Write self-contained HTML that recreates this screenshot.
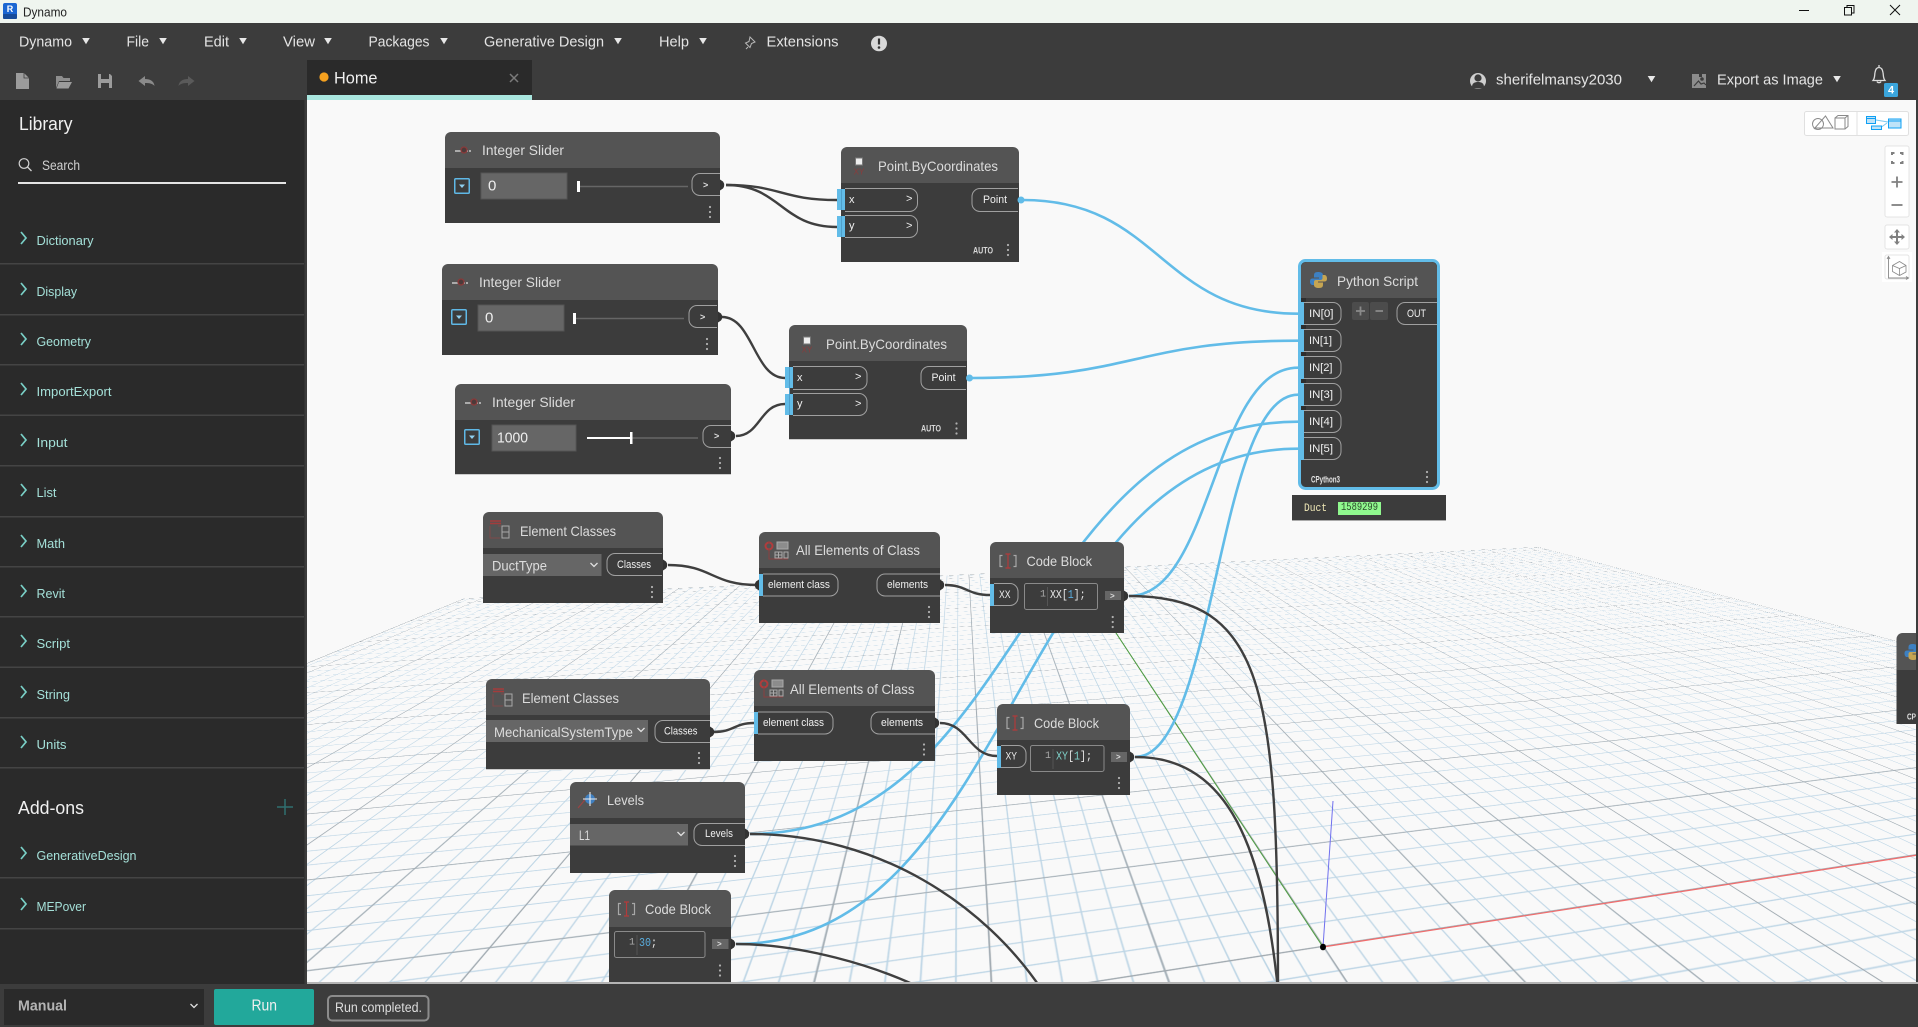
<!DOCTYPE html>
<html><head><meta charset="utf-8"><title>Dynamo</title>
<style>
html,body{margin:0;padding:0;width:1918px;height:1027px;overflow:hidden;background:#f9f9f9}
#wrap{position:absolute;left:0;top:0;width:1918px;height:1027px;overflow:hidden;background:#f9f9f9}
#grid{position:absolute;left:0;top:0;width:4000px;height:2240px;transform-origin:0 0;
transform:matrix3d(1.0655,0.0822,0,0.00021465,1.0395,0.42825,0,0.001084,0,0,1,0,-1057.5,679.8,0,0.3105);
background-image:linear-gradient(to right,#a2aab0 1.5px,transparent 1.5px),linear-gradient(to bottom,#a2aab0 1.5px,transparent 1.5px),linear-gradient(to right,#bdd5e5 1.5px,transparent 1.5px),linear-gradient(to bottom,#bdd5e5 1.5px,transparent 1.5px);
background-size:194.4px 194.4px,194.4px 194.4px,38.88px 38.88px,38.88px 38.88px;
background-position:56px 45.6px,56px 45.6px,17.12px 6.72px,17.12px 6.72px;background-origin:border-box;
border-right:3px solid #a6aeb3;border-bottom:3px solid #a6aeb3;border-left:3px solid #a6aeb3;box-sizing:border-box}
svg{position:absolute;left:0;top:0}
text{font-family:"Liberation Sans",sans-serif;dominant-baseline:central}
.m{font-family:"Liberation Mono",monospace}
.ti{font-size:14px;fill:#dcdcdc}
.po{font-size:11px;fill:#f0f0f0}
.me{font-size:15px;fill:#e4e4e4}
.li{font-size:13px;fill:#a4e0d8}
.s{fill:none;stroke:#a0a0a0;stroke-width:1}
.wd{fill:none;stroke:#3f3f3f;stroke-width:2.4}
.wb{fill:none;stroke:#62bce8;stroke-width:2.6}
.hd{fill:#545454}.bd{fill:#3c3c3c}
</style></head><body>
<div id="wrap">
<div id="grid"></div>
<svg width="1918" height="1027" viewBox="0 0 1918 1027" xmlns="http://www.w3.org/2000/svg">
<defs>
<g id="kb"><circle cy="-5" r="1.1" fill="#b0b0b0"/><circle r="1.1" fill="#b0b0b0"/><circle cy="5" r="1.1" fill="#b0b0b0"/></g>
<path id="ar" d="M-3.8-3H3.8L0 3.2Z" fill="#e8e8e8"/>
<path id="ch" d="M-2.5-6L2.5 0L-2.5 6" fill="none" stroke="#79cfc6" stroke-width="1.7"/>
<path id="sc" d="M-3.5-2L0 1.5L3.5-2" fill="none" stroke="#e0e0e0" stroke-width="1.3"/>
<path id="kn" d="M0-5.5L3-3.500Q5.500 0 3 3.500L0 5.500Z" fill="#333"/>
<path id="kl" d="M0-5.500L-3-3.500Q-5.500 0-3 3.500L0 5.500Z" fill="#333"/>
<g id="cb"><path d="M-5.500-5.500H-8V5.500H-5.500M5.500-5.500H8V5.500H5.500" fill="none" stroke="#a8a8a8" stroke-width="1.200"/><path d="M0-7V7M-2.500-7H2.500M-2.500 7H2.500" fill="none" stroke="#b23b3b" stroke-width="1.200"/></g>
<g id="ec"><path d="M-11-9H0M-11-6.500H0" stroke="#a33c3c" stroke-width="1.500"/><path d="M-11-4V8H-1M0-4H-3" fill="none" stroke="#7e4a4a" stroke-width="1"/><path d="M1-4H8V8H1ZM1 2H8" fill="none" stroke="#a8a8a8" stroke-width="1"/></g>
<g id="ae"><circle cx="-8" cy="-5" r="3.500" fill="none" stroke="#b03c3c" stroke-width="2"/><path d="M-8-10V-8M-8-2V8H11" fill="none" stroke="#8a4040" stroke-width="1"/><path d="M0-9H11V-2H0Z" fill="#8c8c8c" stroke="#aaa"/><path d="M-2 1H5V7H-2ZM1.500 1V7M-2 4H5M7 1H11V7H7Z" fill="none" stroke="#aaa" stroke-width="1"/></g>
<g id="py"><path d="M-.5-8C-4.500-8-4.500-6-4.500-4V-2.500H.5V-1.500H-6C-8-1.500-8.500 0-8.500 1.500C-8.500 3.500-7.500 5-6 5H-4V2C-4 .5-3 0-1.500 0H2.500C4 0 4.500-1 4.500-2V-5C4.500-7 2.500-8-.5-8Z" fill="#3d80c2"/><path d="M.5 8C4.500 8 4.500 6 4.500 4V2.500H-.5V1.500H6C8 1.500 8.500 0 8.500-1.500C8.500-3.500 7.500-5 6-5H4V-2C4-.5 3 0 1.500 0H-2.500C-4 0-4.500 1-4.500 2V5C-4.500 7-2.500 8 .5 8Z" fill="#c6a552"/></g>
<g id="sl"><path d="M-9 1H7" stroke="#c8c8c8" stroke-width="1.500" stroke-dasharray="6 1"/><circle r="3" fill="#4c3a3a" stroke="#8a3a3a" stroke-width="1.300"/></g>
<g id="dd"><rect x=".75" y=".75" width="14.500" height="14.500" rx="1" fill="none" stroke="#5fb8e6" stroke-width="1.500"/><path d="M5 6.500H11L8 10Z" fill="#8fd0f0"/></g>
<g id="pt"><rect x="-3.500" y="-9" width="7" height="7" fill="#eee" stroke="#777"/></g>
</defs>

<!-- axes -->
<path d="M1323 947L1116 633L1072 567" stroke="#4d9e3e" stroke-width="1" fill="none"/>
<path d="M1323 947L1918 855" stroke="#f26c6c" stroke-width="1.200" fill="none"/>
<path d="M1323 947L1333 801" stroke="#7070ee" stroke-width="1" fill="none"/>
<ellipse cx="1323" cy="947" rx="3" ry="3.300" fill="#000"/>

<!-- wires -->
<g>
<path class="wb" d="M1023 200C1160 200 1160 313.700 1298 313.700"/>
<path class="wb" d="M971 378C1135 378 1135 340.700 1298 340.700"/>
<path class="wb" d="M1129 596C1213 596 1213 367.700 1298 367.700"/>
<path class="wb" d="M1135 757C1216 757 1216 394.700 1298 394.700"/>
<path class="wb" d="M750 834C1023 834 1023 421.700 1298 421.700"/>
<path class="wb" d="M736 944C1016 944 1016 448.700 1298 448.700"/>
<path class="wd" d="M726 185C781 185 781 200 837 200"/>
<path class="wd" d="M726 185C781 185 781 227 837 227"/>
<path class="wd" d="M722 317C753 317 754 378 785 378"/>
<path class="wd" d="M736 436C760 436 760 404 785 404"/>
<path class="wd" d="M668 565C712 565 712 585 757 585"/>
<path class="wd" d="M945 585C967 585 967 595 990 595"/>
<path class="wd" d="M714 732C734 732 734 723 754 723"/>
<path class="wd" d="M940 723C968 723 969 756 997 756"/>
<path class="wd" d="M1129 596C1265 596 1278 690 1278 990"/>
<path class="wd" d="M1135 757C1220 757 1262 830 1278 990"/>
<path class="wd" d="M750 834C880 834 985 905 1042 990"/>
<path class="wd" d="M736 944C800 944 875 965 925 990"/>
</g>

<!-- Integer slider 1 -->
<rect class="hd" x="445" y="132" width="275" height="50" rx="6"/><rect class="bd" x="445" y="168" width="275" height="55"/>
<use href="#sl" x="464" y="150"/>
<text class="ti" x="482" y="150" textLength="82" lengthAdjust="spacingAndGlyphs">Integer Slider</text>
<use href="#dd" x="454" y="178"/>
<rect x="481" y="173" width="86" height="26" fill="#666" stroke="#555"/>
<text x="488" y="186" font-size="15" fill="#eee">0</text>
<rect x="577" y="181" width="3" height="11" fill="#fff"/><path d="M580 186.500H688" stroke="#666" stroke-width="1.500"/>
<path class="s" d="M720 173.500H700a8 8 0 0 0-8 8v6a8 8 0 0 0 8 8H720"/>
<text x="703" y="185" font-size="9" fill="#ddd" font-weight="bold">&gt;</text>
<use href="#kn" x="720" y="185"/>
<use href="#kb" x="710" y="212"/>

<!-- Integer slider 2 -->
<rect class="hd" x="442" y="264" width="276" height="50" rx="6"/><rect class="bd" x="442" y="300" width="276" height="55"/>
<use href="#sl" x="461" y="282"/>
<text class="ti" x="479" y="282" textLength="82" lengthAdjust="spacingAndGlyphs">Integer Slider</text>
<use href="#dd" x="451" y="309"/>
<rect x="478" y="305" width="86" height="26" fill="#666" stroke="#555"/>
<text x="485" y="318" font-size="15" fill="#eee">0</text>
<rect x="573" y="313" width="3" height="11" fill="#fff"/><path d="M576 318.500H684" stroke="#666" stroke-width="1.500"/>
<path class="s" d="M717 305.500H697a8 8 0 0 0-8 8v6a8 8 0 0 0 8 8H717"/>
<text x="700" y="317" font-size="9" fill="#ddd" font-weight="bold">&gt;</text>
<use href="#kn" x="718" y="317"/>
<use href="#kb" x="707" y="344"/>

<!-- Integer slider 3 -->
<rect class="hd" x="455" y="384" width="276" height="50" rx="6"/><rect class="bd" x="455" y="420" width="276" height="54"/>
<rect x="455" y="474" width="276" height="1" fill="#ccc"/>
<use href="#sl" x="474" y="402"/>
<text class="ti" x="492" y="402" textLength="83" lengthAdjust="spacingAndGlyphs">Integer Slider</text>
<use href="#dd" x="464" y="429"/>
<rect x="492" y="425" width="84" height="26" fill="#666" stroke="#555"/>
<text x="497" y="438" font-size="15" fill="#eee" textLength="31" lengthAdjust="spacingAndGlyphs">1000</text>
<path d="M631 438H698" stroke="#666" stroke-width="1.500"/><path d="M587 438H631" stroke="#fff" stroke-width="2"/><rect x="630" y="432" width="2.500" height="12" fill="#fff"/>
<path class="s" d="M731 425.500H711a8 8 0 0 0-8 8v6a8 8 0 0 0 8 8H731"/>
<text x="714" y="436" font-size="9" fill="#ddd" font-weight="bold">&gt;</text>
<use href="#kn" x="731" y="436"/>
<use href="#kb" x="720" y="463"/>

<!-- Point 1 -->
<rect class="hd" x="841" y="147" width="178" height="50" rx="6"/><rect class="bd" x="841" y="183" width="178" height="79"/>
<use href="#pt" x="859" y="167"/><text x="859" y="172" font-size="8" fill="#8a3c3c" text-anchor="middle">XY</text>
<text class="ti" x="878" y="166" textLength="120" lengthAdjust="spacingAndGlyphs">Point.ByCoordinates</text>
<path class="s" d="M845 188.500H909.500a8 8 0 0 1 8 8v7a8 8 0 0 1-8 8H845"/><path class="s" d="M845 215.500H909.500a8 8 0 0 1 8 8v6a8 8 0 0 1-8 8H845"/>
<rect x="837" y="189" width="8" height="21" fill="#62bce8"/><rect x="837" y="216" width="8" height="21" fill="#62bce8"/><rect x="841" y="189" width="1" height="21" fill="#4f9fca"/><rect x="841" y="216" width="1" height="21" fill="#4f9fca"/>
<text class="po" x="849" y="200">x</text><text class="po" x="849" y="226">y</text>
<text class="po" x="906" y="199">&gt;</text><text class="po" x="906" y="226">&gt;</text>
<path class="s" d="M1018 188.500H980a8 8 0 0 0-8 8v7a8 8 0 0 0 8 8H1018"/>
<text class="po" x="983" y="200" textLength="24" lengthAdjust="spacingAndGlyphs">Point</text>
<circle cx="1021" cy="200" r="3.500" fill="#62bce8"/>
<text x="973" y="251" font-size="9.500" font-weight="bold" fill="#d8d8d8" textLength="20" lengthAdjust="spacingAndGlyphs">AUTO</text>
<use href="#kb" x="1008" y="250"/>

<!-- Point 2 -->
<rect class="hd" x="789" y="325" width="178" height="50" rx="6"/><rect class="bd" x="789" y="361" width="178" height="78"/>
<rect x="789" y="439" width="178" height="1" fill="#ccc"/>
<use href="#pt" x="807" y="346"/><text x="807" y="350" font-size="8" fill="#8a3c3c" text-anchor="middle">XY</text>
<text class="ti" x="826" y="344" textLength="121" lengthAdjust="spacingAndGlyphs">Point.ByCoordinates</text>
<path class="s" d="M793 366.500H859a8 8 0 0 1 8 8v7a8 8 0 0 1-8 8H793"/><path class="s" d="M793 393.500H859a8 8 0 0 1 8 8v6a8 8 0 0 1-8 8H793"/>
<rect x="785" y="367" width="8" height="21" fill="#62bce8"/><rect x="785" y="394" width="8" height="21" fill="#62bce8"/><rect x="789" y="367" width="1" height="48" fill="#4f9fca"/>
<text class="po" x="797" y="378">x</text><text class="po" x="797" y="404">y</text>
<text class="po" x="855" y="377">&gt;</text><text class="po" x="855" y="404">&gt;</text>
<path class="s" d="M966 366.500H929a8 8 0 0 0-8 8v7a8 8 0 0 0 8 8H966"/>
<text class="po" x="931.500" y="378" textLength="24" lengthAdjust="spacingAndGlyphs">Point</text>
<circle cx="969.500" cy="378" r="3.500" fill="#62bce8"/>
<text x="921" y="429" font-size="9.500" font-weight="bold" fill="#d8d8d8" textLength="20" lengthAdjust="spacingAndGlyphs">AUTO</text>
<use href="#kb" x="956.500" y="428.500"/>

<!-- Python -->
<rect x="1299.500" y="260.500" width="139" height="228" rx="6" fill="#3c3c3c" stroke="#62bce8" stroke-width="3"/>
<path d="M1301 298V268a6 6 0 0 1 6-6H1431a6 6 0 0 1 6 6V298Z" fill="#545454"/>
<use href="#py" x="1318.500" y="280"/>
<text class="ti" x="1337" y="281" textLength="81" lengthAdjust="spacingAndGlyphs">Python Script</text>
<path class="s" d="M1303 302.500H1333a8 8 0 0 1 8 8v6a8 8 0 0 1-8 8H1303"/>
<path class="s" d="M1303 329.500H1333a8 8 0 0 1 8 8v6a8 8 0 0 1-8 8H1303"/>
<path class="s" d="M1303 356.500H1333a8 8 0 0 1 8 8v6a8 8 0 0 1-8 8H1303"/>
<path class="s" d="M1303 383.500H1333a8 8 0 0 1 8 8v6a8 8 0 0 1-8 8H1303"/>
<path class="s" d="M1303 410.500H1333a8 8 0 0 1 8 8v6a8 8 0 0 1-8 8H1303"/>
<path class="s" d="M1303 437.500H1333a8 8 0 0 1 8 8v6a8 8 0 0 1-8 8H1303"/>
<rect x="1301" y="298" width="3" height="162" fill="#62bce8"/>
<g fill="#2e2e2e"><rect x="1301" y="325" width="5" height="4"/><rect x="1301" y="352" width="5" height="4"/><rect x="1301" y="379" width="5" height="4"/><rect x="1301" y="406" width="5" height="4"/><rect x="1301" y="298" width="5" height="4"/></g>
<text class="po" x="1309" y="314" textLength="24.500" lengthAdjust="spacingAndGlyphs">IN[0]</text>
<text class="po" x="1309" y="341" textLength="23" lengthAdjust="spacingAndGlyphs">IN[1]</text>
<text class="po" x="1309" y="368" textLength="23.500" lengthAdjust="spacingAndGlyphs">IN[2]</text>
<text class="po" x="1309" y="395" textLength="24" lengthAdjust="spacingAndGlyphs">IN[3]</text>
<text class="po" x="1309" y="422" textLength="24" lengthAdjust="spacingAndGlyphs">IN[4]</text>
<text class="po" x="1309" y="449" textLength="24" lengthAdjust="spacingAndGlyphs">IN[5]</text>
<rect x="1352" y="302" width="17" height="18" rx="2" fill="#4c4c4c"/><rect x="1370" y="302" width="18" height="18" rx="2" fill="#4c4c4c"/>
<path d="M1360.500 306.500V315.500M1356 311H1365" stroke="#8a8a8a" stroke-width="1.800"/><path d="M1375.500 311H1383" stroke="#8a8a8a" stroke-width="1.800"/>
<path class="s" d="M1437 302.500H1405a8 8 0 0 0-8 8v6a8 8 0 0 0 8 8H1437"/>
<text class="po" x="1407" y="314" textLength="19" lengthAdjust="spacingAndGlyphs">OUT</text>
<text x="1311" y="479.500" font-size="9" font-weight="bold" fill="#e4e4e4" textLength="29" lengthAdjust="spacingAndGlyphs">CPython3</text>
<use href="#kb" x="1427" y="477"/>

<!-- watch -->
<rect x="1292" y="495" width="154" height="25" fill="#3c3c3c"/><rect x="1292" y="520" width="154" height="1" fill="#aaa"/>
<text class="m" x="1304" y="509" font-size="11" fill="#f2eab8" textLength="23" lengthAdjust="spacingAndGlyphs">Duct</text>
<rect x="1338" y="502" width="43" height="13" fill="#90f88e"/>
<text class="m" x="1341" y="508" font-size="11" fill="#2c4a2c" textLength="37" lengthAdjust="spacingAndGlyphs">1589299</text>

<!-- Element Classes 1 -->
<rect class="hd" x="483" y="512" width="180" height="50" rx="6"/><rect class="bd" x="483" y="548" width="180" height="55"/>
<use href="#ec" x="501" y="530"/>
<text class="ti" x="520" y="531" textLength="96" lengthAdjust="spacingAndGlyphs">Element Classes</text>
<rect x="483" y="554" width="118.500" height="22" fill="#666"/>
<text x="492" y="565.500" font-size="14" fill="#ddd" textLength="55" lengthAdjust="spacingAndGlyphs">DuctType</text>
<use href="#sc" x="594" y="565"/>
<path class="s" d="M662 553.500H615a8 8 0 0 0-8 8v6a8 8 0 0 0 8 8H662"/>
<text class="po" x="617" y="565" textLength="34" lengthAdjust="spacingAndGlyphs">Classes</text>
<use href="#kn" x="663" y="565"/>
<use href="#kb" x="652" y="592"/>

<!-- All Elements 1 -->
<rect class="hd" x="759" y="532" width="181" height="50" rx="6"/><rect class="bd" x="759" y="568" width="181" height="55"/>
<use href="#ae" x="777" y="551"/>
<text class="ti" x="796" y="550" textLength="124" lengthAdjust="spacingAndGlyphs">All Elements of Class</text>
<rect x="759" y="574" width="4" height="22" fill="#62bce8"/>
<path class="s" d="M763 574H830a8 8 0 0 1 8 8v6a8 8 0 0 1-8 8H763"/>
<text class="po" x="768" y="585" textLength="62" lengthAdjust="spacingAndGlyphs">element class</text>
<path class="s" d="M940 574H885a8 8 0 0 0-8 8v6a8 8 0 0 0 8 8H940"/>
<text class="po" x="887" y="585" textLength="41" lengthAdjust="spacingAndGlyphs">elements</text>
<use href="#kl" x="759" y="585"/><use href="#kn" x="940" y="585"/>
<use href="#kb" x="929" y="612"/>

<!-- Code Block 1 -->
<rect class="hd" x="990" y="542" width="134" height="50" rx="6"/><rect class="bd" x="990" y="578" width="134" height="55"/>
<use href="#cb" x="1008" y="561"/>
<text class="ti" x="1026.500" y="561" textLength="65.500" lengthAdjust="spacingAndGlyphs">Code Block</text>
<rect x="990" y="584" width="4" height="22" fill="#62bce8"/>
<path class="s" d="M994 583.500H1010a8 8 0 0 1 8 8v6a8 8 0 0 1-8 8H994"/>
<text class="po" x="999" y="595" textLength="11.500" lengthAdjust="spacingAndGlyphs">XX</text>
<rect x="1024.500" y="583.500" width="73" height="26" rx="2" fill="none" stroke="#8a8a8a"/>
<text class="m" x="1040" y="595" font-size="10" fill="#aaa">1</text><path d="M1047.500 587V606" stroke="#555"/>
<text class="m" x="1050" y="595" font-size="12" fill="#e8e8e8" textLength="35.500" lengthAdjust="spacingAndGlyphs">XX[<tspan fill="#5aaee0">1</tspan>];</text>
<rect x="1105" y="591" width="16" height="9" fill="#666"/><text x="1110" y="596" font-size="8" fill="#ddd" font-weight="bold">&gt;</text>
<use href="#kn" x="1124" y="596"/>
<use href="#kb" x="1112.700" y="622"/>

<!-- Element Classes 2 -->
<rect class="hd" x="486" y="679" width="224" height="50" rx="6"/><rect class="bd" x="486" y="715" width="224" height="54"/>
<rect x="486" y="769" width="224" height="1" fill="#ccc"/>
<use href="#ec" x="504" y="698"/>
<text class="ti" x="522" y="698" textLength="97" lengthAdjust="spacingAndGlyphs">Element Classes</text>
<rect x="486" y="720" width="162" height="22" fill="#666"/>
<text x="494" y="732" font-size="14" fill="#ddd" textLength="139" lengthAdjust="spacingAndGlyphs">MechanicalSystemType</text>
<use href="#sc" x="641" y="730"/>
<path class="s" d="M710 720.500H663a8 8 0 0 0-8 8v6a8 8 0 0 0 8 8H710"/>
<text class="po" x="664" y="731.500" textLength="33.500" lengthAdjust="spacingAndGlyphs">Classes</text>
<use href="#kn" x="710" y="732"/>
<use href="#kb" x="699" y="758"/>

<!-- All Elements 2 -->
<rect class="hd" x="754" y="670" width="181" height="50" rx="6"/><rect class="bd" x="754" y="706" width="181" height="55"/>
<use href="#ae" x="772" y="689"/>
<text class="ti" x="790" y="689" textLength="124.500" lengthAdjust="spacingAndGlyphs">All Elements of Class</text>
<rect x="754" y="712" width="4" height="22" fill="#62bce8"/>
<path class="s" d="M758 712H825a8 8 0 0 1 8 8v6a8 8 0 0 1-8 8H758"/>
<text class="po" x="763" y="723" textLength="61" lengthAdjust="spacingAndGlyphs">element class</text>
<path class="s" d="M935 712H879a8 8 0 0 0-8 8v6a8 8 0 0 0 8 8H935"/>
<text class="po" x="881" y="723" textLength="42" lengthAdjust="spacingAndGlyphs">elements</text>
<use href="#kn" x="935" y="723"/>
<use href="#kb" x="924" y="749.500"/>

<!-- Code Block 2 -->
<rect class="hd" x="997" y="704" width="133" height="50" rx="6"/><rect class="bd" x="997" y="740" width="133" height="55"/>
<use href="#cb" x="1015" y="723"/>
<text class="ti" x="1034" y="723" textLength="65" lengthAdjust="spacingAndGlyphs">Code Block</text>
<rect x="997" y="746" width="4" height="22" fill="#62bce8"/>
<path class="s" d="M1001 745.500H1018a8 8 0 0 1 8 8v6a8 8 0 0 1-8 8H1001"/>
<text class="po" x="1005.500" y="756.500" textLength="11.500" lengthAdjust="spacingAndGlyphs">XY</text>
<rect x="1030.500" y="745.500" width="73.500" height="26" rx="2" fill="none" stroke="#8a8a8a"/>
<text class="m" x="1045" y="756.500" font-size="10" fill="#aaa">1</text><path d="M1053 749V769" stroke="#555"/>
<text class="m" x="1056" y="756.500" font-size="12" fill="#e8e8e8" textLength="36" lengthAdjust="spacingAndGlyphs"><tspan fill="#7fd0c8">XY</tspan>[<tspan fill="#7fd0c8">1</tspan>];</text>
<rect x="1111" y="752" width="16" height="10" fill="#666"/><text x="1116" y="757" font-size="8" fill="#ddd" font-weight="bold">&gt;</text>
<use href="#kn" x="1130" y="757"/>
<use href="#kb" x="1119" y="783"/>

<!-- Levels -->
<rect class="hd" x="570" y="782" width="175" height="50" rx="6"/><rect class="bd" x="570" y="818" width="175" height="55"/>
<path d="M578 808L589 795" stroke="#9a4444" stroke-width="1.200"/>
<circle cx="590" cy="799" r="5" fill="#3f7fc0"/><path d="M583 799H597M590 792V806" stroke="#eee" stroke-width="1.100"/>
<text class="ti" x="607" y="800" textLength="37" lengthAdjust="spacingAndGlyphs">Levels</text>
<rect x="570" y="824" width="118" height="21.500" fill="#666"/>
<text x="579" y="835" font-size="14" fill="#ddd" textLength="11" lengthAdjust="spacingAndGlyphs">L1</text>
<use href="#sc" x="681" y="834"/>
<path class="s" d="M745 823.500H702a8 8 0 0 0-8 8v6a8 8 0 0 0 8 8H745"/>
<text class="po" x="705" y="834" textLength="28" lengthAdjust="spacingAndGlyphs">Levels</text>
<use href="#kn" x="745" y="834"/>
<use href="#kb" x="735" y="861"/>

<!-- Code Block 3 -->
<rect class="hd" x="609" y="890" width="122" height="50" rx="6"/><rect class="bd" x="609" y="927" width="122" height="60"/>
<use href="#cb" x="626.500" y="909"/>
<text class="ti" x="645" y="909" textLength="66" lengthAdjust="spacingAndGlyphs">Code Block</text>
<rect x="614.500" y="931.500" width="90.500" height="26" rx="2" fill="none" stroke="#8a8a8a"/>
<text class="m" x="629" y="943" font-size="10" fill="#aaa">1</text><path d="M637 935V955" stroke="#555"/>
<text class="m" x="639" y="943" font-size="12" fill="#e8e8e8" textLength="18" lengthAdjust="spacingAndGlyphs"><tspan fill="#5aaee0">30</tspan>;</text>
<rect x="712" y="939" width="16.500" height="10" fill="#666"/><text x="717" y="944" font-size="8" fill="#ddd" font-weight="bold">&gt;</text>
<use href="#kn" x="731" y="944"/>
<use href="#kb" x="720" y="970.500"/>

<!-- partial python right -->
<rect class="hd" x="1896.500" y="633" width="25" height="50" rx="6"/><rect class="bd" x="1896.500" y="670" width="25" height="54"/>
<use href="#py" x="1913" y="652"/>
<text x="1907" y="717" font-size="8" font-weight="bold" fill="#e4e4e4" textLength="9" lengthAdjust="spacingAndGlyphs">CP</text>

<!-- canvas toggle and controls -->
<rect x="1804.500" y="111.500" width="104" height="24" rx="2" fill="#fff" stroke="#e0e0e0"/>
<path d="M1857 112V135" stroke="#e0e0e0"/>
<g fill="none" stroke="#8a8a8a" stroke-width="1">
<circle cx="1818" cy="124" r="5.500"/><path d="M1814 129L1825.500 116L1833 128H1815"/><path d="M1835 118H1845V129H1835ZM1835 118L1838 115.500H1848V126.500L1845 129M1845 118L1848 115.500"/>
</g>
<g stroke="#0fa0f4" stroke-width="1">
<path d="M1876 120L1888 122M1880 128L1887 123" stroke="#7cc8f0"/>
<rect x="1866.500" y="116.500" width="9" height="7" fill="#bfe3f8"/><path d="M1866.500 118.500H1875.500" fill="none"/>
<rect x="1888.500" y="119" width="12.500" height="9" fill="#bfe3f8"/><path d="M1888.500 121H1901" fill="none"/>
<rect x="1871.500" y="126" width="10" height="3.500" fill="#bfe3f8"/>
</g>
<rect x="1885" y="146" width="24" height="71" rx="2" fill="#fff" stroke="#e4e4e4"/>
<path d="M1892 155V153H1894.500M1900 153H1902.500V155M1902.500 161V163H1900M1894.500 163H1892V161" fill="none" stroke="#808080" stroke-width="2"/>
<path d="M1891.500 182H1902.500M1897 176.500V187.500" stroke="#808080" stroke-width="1.800"/>
<path d="M1891.500 205H1902.500" stroke="#808080" stroke-width="1.800"/>
<rect x="1885" y="225" width="24" height="24" rx="2" fill="#fff" stroke="#e4e4e4"/>
<path d="M1897 230V244M1890 237H1904" stroke="#808080" stroke-width="2"/><path d="M1897 229L1900 232.500H1894ZM1897 245L1900 241.500H1894ZM1889 237L1892.500 234V240ZM1905 237L1901.500 234V240Z" fill="#808080"/>
<rect x="1882" y="252" width="30" height="30" fill="#fff"/><rect x="1885" y="255" width="24" height="24" rx="2" fill="#fff" stroke="#e4e4e4"/>
<path d="M1888.500 257V278H1908M1887 259L1888.500 256.500L1890 259M1906 276.500L1908.500 278L1906 279.500" fill="none" stroke="#8a8a8a" stroke-width=".9"/>
<path d="M1892.500 265.500L1899.500 261.500L1906 265.500V272L1899.500 275.500L1892.500 271.500ZM1892.500 265.500L1899.500 268.500L1906 265.500M1899.500 268.500V275.500" fill="none" stroke="#8a8a8a" stroke-width=".8"/>

<!-- title bar -->
<rect x="0" y="0" width="1918" height="23" fill="#eff5ef"/>
<rect x="3" y="3" width="14" height="16" rx="2" fill="#1b66d2"/><rect x="3" y="14" width="14" height="5" rx="1" fill="#174c9a"/>
<text x="10" y="9" font-size="9" font-weight="bold" fill="#fff" text-anchor="middle">R</text>
<text x="23" y="12" font-size="13" fill="#222" textLength="44" lengthAdjust="spacingAndGlyphs">Dynamo</text>
<path d="M1799 10.500H1809" stroke="#111" stroke-width="1"/>
<path d="M1844.500 7.500H1851.500V15H1844.500ZM1847 7.500V5.500H1854V13H1851.500" fill="none" stroke="#111"/>
<path d="M1890 5L1900 15M1900 5L1890 15" stroke="#111" stroke-width="1"/>

<!-- menu -->
<rect x="0" y="23" width="1918" height="77" fill="#3c3c3c"/>
<rect x="1916" y="100" width="2" height="884" fill="#3c3c3c"/>
<text class="me" x="19" y="42" textLength="53" lengthAdjust="spacingAndGlyphs">Dynamo</text><use href="#ar" x="86" y="41"/>
<text class="me" x="126.500" y="42" textLength="22.500" lengthAdjust="spacingAndGlyphs">File</text><use href="#ar" x="163" y="41"/>
<text class="me" x="204" y="42" textLength="25" lengthAdjust="spacingAndGlyphs">Edit</text><use href="#ar" x="243" y="41"/>
<text class="me" x="283" y="42" textLength="32" lengthAdjust="spacingAndGlyphs">View</text><use href="#ar" x="328" y="41"/>
<text class="me" x="368.500" y="42" textLength="61" lengthAdjust="spacingAndGlyphs">Packages</text><use href="#ar" x="444" y="41"/>
<text class="me" x="484" y="42" textLength="120" lengthAdjust="spacingAndGlyphs">Generative Design</text><use href="#ar" x="618" y="41"/>
<text class="me" x="659" y="42" textLength="30" lengthAdjust="spacingAndGlyphs">Help</text><use href="#ar" x="703" y="41"/>
<path d="M748 47L746 49M750 37L755 42L751.500 43.500L750 47.500L745.500 43L749 41.500Z" fill="none" stroke="#b8b8b8" stroke-width="1"/>
<text class="me" x="766.500" y="42" textLength="72" lengthAdjust="spacingAndGlyphs">Extensions</text>
<ellipse cx="879" cy="43.500" rx="8" ry="7.800" fill="#d8d8d8"/><path d="M879 38.500V44.500" stroke="#333" stroke-width="2.200"/><circle cx="879" cy="47.500" r="1.300" fill="#333"/>

<!-- toolbar icons -->
<path d="M16 73H24L29 78V89H16Z" fill="#9c9c9c"/><path d="M24 73V78H29" fill="none" stroke="#3c3c3c" stroke-width=".8"/>
<path d="M56 76H62L63.500 78H70V81H59L56 88Z" fill="#8e8e8e"/><path d="M59 82H72L68.500 88.500H56.500Z" fill="#9c9c9c"/>
<path d="M98 74H110L112 76V88H98Z" fill="#9c9c9c"/><rect x="101" y="74" width="8" height="5" fill="#3c3c3c"/><rect x="101" y="83" width="8" height="5" fill="#3c3c3c"/>
<path d="M138.500 81L145 76V79C150 79 154 81 154.500 86C152.500 83.500 149.500 83 145 83V86Z" fill="#8a8a8a"/>
<path d="M194.500 81L188 76V79C183 79 179 81 178.500 86C180.500 83.500 183.500 83 188 83V86Z" fill="#5a5a5a"/>

<!-- tab -->
<rect x="307" y="60" width="225" height="40" fill="#2a2a2a"/><rect x="307" y="95" width="225" height="5" fill="#a9e6df"/>
<circle cx="324" cy="77" r="4.600" fill="#f6a11f"/>
<text x="334" y="78" font-size="17" fill="#f0f0f0" textLength="43.500" lengthAdjust="spacingAndGlyphs">Home</text>
<path d="M510 74L518 82M518 74L510 82" stroke="#7a7a7a" stroke-width="1.500"/>

<!-- right toolbar -->
<circle cx="1478" cy="81" r="8" fill="#cfcfcf"/><circle cx="1478" cy="78" r="3.600" fill="#3c3c3c"/><path d="M1472 87C1472 83 1475 82 1478 82C1481 82 1484 83 1484 87C1482 89 1474 89 1472 87Z" fill="#3c3c3c"/>
<text class="me" x="1496" y="80" textLength="126" lengthAdjust="spacingAndGlyphs">sherifelmansy2030</text><use href="#ar" x="1651.500" y="79"/>
<rect x="1692" y="74" width="14" height="14" fill="#8c8c8c"/><rect x="1699" y="74" width="3" height="3" fill="#3c3c3c"/><circle cx="1702" cy="79" r="1.800" fill="#3c3c3c"/><path d="M1694 86L1698.500 81L1701 84L1704 83L1706 85" fill="none" stroke="#3c3c3c" stroke-width="1.200"/>
<text class="me" x="1717" y="80" textLength="106" lengthAdjust="spacingAndGlyphs">Export as Image</text><use href="#ar" x="1837" y="79"/>
<path d="M1879 65V67.500M1873 80.500C1875 78 1874.500 75 1875 72.500C1875.500 69.500 1877 67.500 1879 67.500C1881 67.500 1882.500 69.500 1883 72.500C1883.500 75 1883 78 1885 80.500ZM1877 81.500C1877.500 83 1880.500 83 1881 81.500" fill="none" stroke="#dcdcdc" stroke-width="1.300"/>
<rect x="1884" y="83" width="14" height="14" rx="1.500" fill="#3aa5dc"/><text x="1891" y="90.500" font-size="11" font-weight="bold" fill="#fff" text-anchor="middle">4</text>

<!-- sidebar -->
<rect x="0" y="100" width="304.500" height="884" fill="#2a2a2a"/><rect x="304.500" y="100" width="2.500" height="884" fill="#3c3c3c"/>
<text x="19" y="124" font-size="18" fill="#f0f0f0" textLength="53.500" lengthAdjust="spacingAndGlyphs">Library</text>
<circle cx="24" cy="163.500" r="4.800" fill="none" stroke="#d0d0d0" stroke-width="1.200"/><path d="M27.500 167L31.500 171" stroke="#d0d0d0" stroke-width="1.300"/>
<text x="42" y="165.500" font-size="13.500" fill="#d0d0d0" textLength="38" lengthAdjust="spacingAndGlyphs">Search</text>
<rect x="18" y="182" width="268" height="2" fill="#e4e4e4"/>
<g fill="#444"><rect y="263" width="304" height="1.500"/><rect y="314" width="304" height="1.500"/><rect y="364" width="304" height="1.500"/><rect y="414.500" width="304" height="1.500"/><rect y="465" width="304" height="1.500"/><rect y="516" width="304" height="1.500"/><rect y="566" width="304" height="1.500"/><rect y="616" width="304" height="1.500"/><rect y="666.500" width="304" height="1.500"/><rect y="717" width="304" height="1.500"/><rect y="767" width="304" height="1.500"/><rect y="877" width="304" height="1.500"/><rect y="928" width="304" height="1.500"/></g>
<use href="#ch" x="23.500" y="238"/><text class="li" x="36.500" y="240.700" textLength="57" lengthAdjust="spacingAndGlyphs">Dictionary</text>
<use href="#ch" x="23.500" y="289"/><text class="li" x="36.500" y="291.500" textLength="40.500" lengthAdjust="spacingAndGlyphs">Display</text>
<use href="#ch" x="23.500" y="339"/><text class="li" x="36.500" y="341.500" textLength="54.500" lengthAdjust="spacingAndGlyphs">Geometry</text>
<use href="#ch" x="23.500" y="389"/><text class="li" x="36.500" y="391.500" textLength="75" lengthAdjust="spacingAndGlyphs">ImportExport</text>
<use href="#ch" x="23.500" y="440"/><text class="li" x="36.500" y="442.500" textLength="31" lengthAdjust="spacingAndGlyphs">Input</text>
<use href="#ch" x="23.500" y="490"/><text class="li" x="36.500" y="492.500" textLength="20" lengthAdjust="spacingAndGlyphs">List</text>
<use href="#ch" x="23.500" y="541"/><text class="li" x="36.500" y="543.500" textLength="28.500" lengthAdjust="spacingAndGlyphs">Math</text>
<use href="#ch" x="23.500" y="591"/><text class="li" x="36.500" y="593.500" textLength="28.500" lengthAdjust="spacingAndGlyphs">Revit</text>
<use href="#ch" x="23.500" y="641"/><text class="li" x="36.500" y="643.500" textLength="33.500" lengthAdjust="spacingAndGlyphs">Script</text>
<use href="#ch" x="23.500" y="692"/><text class="li" x="36.500" y="694.500" textLength="33.500" lengthAdjust="spacingAndGlyphs">String</text>
<use href="#ch" x="23.500" y="742"/><text class="li" x="36.500" y="744.500" textLength="30" lengthAdjust="spacingAndGlyphs">Units</text>
<text x="18" y="808" font-size="18" fill="#f0f0f0" textLength="66" lengthAdjust="spacingAndGlyphs">Add-ons</text>
<path d="M285 799V815M277 807H293" stroke="#2f6f70" stroke-width="1.500"/>
<use href="#ch" x="23.500" y="853"/><text class="li" x="36.500" y="855.500" textLength="100" lengthAdjust="spacingAndGlyphs">GenerativeDesign</text>
<use href="#ch" x="23.500" y="904"/><text class="li" x="36.500" y="906.500" textLength="49.500" lengthAdjust="spacingAndGlyphs">MEPover</text>

<!-- bottom -->
<rect x="307" y="982" width="1611" height="2" fill="#b4b4b4"/>
<rect x="0" y="984" width="1918" height="43" fill="#3c3c3c"/>
<rect x="4" y="989" width="200" height="36" fill="#2a2a2a"/>
<text x="18" y="1006" font-size="15" font-weight="bold" fill="#b4b4b4" textLength="49" lengthAdjust="spacingAndGlyphs">Manual</text>
<use href="#sc" x="194" y="1006"/>
<rect x="214" y="989" width="100" height="36" rx="2" fill="#22a89b"/>
<text x="251.500" y="1006" font-size="15.500" fill="#f0f0f0" textLength="25.500" lengthAdjust="spacingAndGlyphs">Run</text>
<rect x="328" y="996" width="100.500" height="24.500" rx="4" fill="#3f3f3f" stroke="#8c8c8c" stroke-width="2"/>
<text x="335" y="1007.500" font-size="13.500" fill="#dcdcdc" textLength="87" lengthAdjust="spacingAndGlyphs">Run completed.</text>
</svg>
</div>
</body></html>
